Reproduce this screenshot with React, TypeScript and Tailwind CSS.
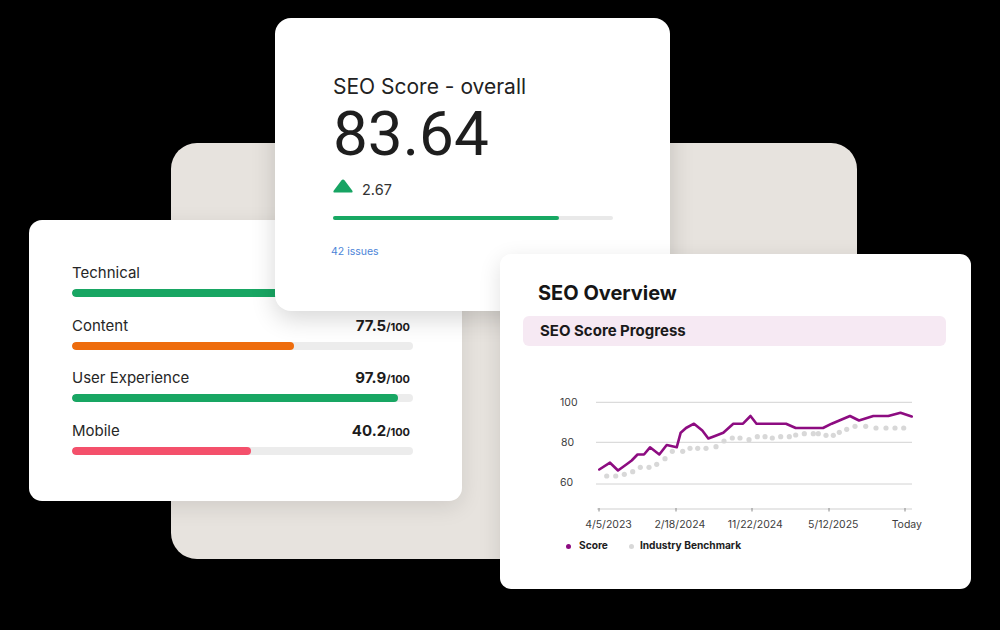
import React from "react";

const score: [number, number][] = [
  [599.3, 469.5], [610, 462.7], [618, 470.5], [627, 464], [631.7, 460.5], [637.5, 454.5], [644, 454.5],
  [650, 447.3], [659.3, 454.5], [666.7, 445], [676.7, 447.3], [680.7, 432.7], [686, 428], [694, 423.7],
  [702.3, 430.5], [708.3, 438.5], [715, 436], [723.3, 432.7], [733.3, 423.7], [743, 423.7], [750.5, 416],
  [756.5, 423.7], [786, 423.7], [795.7, 428], [823, 428], [831.7, 423.7], [841.7, 419.5], [850, 416],
  [859, 420.5], [873.3, 416], [888.3, 416], [900.5, 412.8], [911.7, 416.5],
];

const bench: [number, number][] = [
  [606.7, 476], [615.7, 476], [624.3, 474.3], [632.7, 471.7], [640.3, 467.3], [649, 467.3], [656.7, 464.3],
  [665, 458.7], [672.3, 451.3], [682.7, 451.3], [690, 448.3], [697.7, 448.3], [706, 448.3], [716, 446.7],
  [724, 441], [732.3, 438], [740, 438], [749, 439.7], [757.3, 436.7], [765, 436.7], [772.3, 438],
  [780.7, 436.7], [789.3, 436.7], [795.7, 435], [804.3, 433.7], [813.3, 433.7], [818.3, 433.7], [826, 435.3],
  [833.3, 435.3], [839.3, 432.3], [846.7, 429.3], [855, 426.3], [865.7, 426.3], [876, 428], [886, 428],
  [895, 428], [903.7, 428],
];

const rows = [
  { label: "Technical", value: "88.3", fill: 82, color: "bg-[#18a663]" },
  { label: "Content", value: "77.5", fill: 65.1, color: "bg-[#ee6c0c]" },
  { label: "User Experience", value: "97.9", fill: 95.5, color: "bg-[#18a663]" },
  { label: "Mobile", value: "40.2", fill: 52.5, color: "bg-[#f4506b]" },
];

function Chart() {
  const xLabels: [number, string][] = [
    [608.5, "4/5/2023"],
    [679.8, "2/18/2024"],
    [755.3, "11/22/2024"],
    [833.3, "5/12/2025"],
    [906.8, "Today"],
  ];
  return (
    <svg width={380} height={140} viewBox="550 390 380 140" className="block">
      {[402.3, 442.3, 484].map((y) => (
        <line key={y} x1={596} x2={912} y1={y} y2={y} stroke="#d2d2d2" strokeWidth={1} />
      ))}
      <line x1={597} x2={912} y1={509} y2={509} stroke="#cfcfcf" strokeWidth={1} />
      {[599, 676, 752, 829, 905].map((x) => (
        <line key={x} x1={x} x2={x} y1={508} y2={511.5} stroke="#8a8a8a" strokeWidth={1} />
      ))}
      <g fontFamily="Inter, sans-serif" fontSize={10.5} fill="#3d3d3d">
        <text x={560} y={406.3}>100</text>
        <text x={561} y={446}>80</text>
        <text x={560} y={486}>60</text>
        {xLabels.map(([x, t]) => (
          <text key={t} x={x} y={527.8} textAnchor="middle">
            {t}
          </text>
        ))}
      </g>
      {bench.map(([x, y], i) => (
        <circle key={i} cx={x} cy={y} r={2.6} fill="#d8d8d8" />
      ))}
      <polyline
        points={score.map((p) => p.join(",")).join(" ")}
        fill="none"
        stroke="#8d0c81"
        strokeWidth={2.6}
        strokeLinejoin="round"
        strokeLinecap="round"
      />
    </svg>
  );
}

export default function App() {
  return (
    <div className="relative w-[1000px] h-[630px] overflow-hidden bg-black font-[Inter,sans-serif]">
      {/* beige backdrop */}
      <div className="absolute left-[171px] top-[143px] w-[686px] h-[416px] rounded-[26px] bg-[#e7e3de]" />

      {/* left card: category scores */}
      <div className="absolute left-[29px] top-[220px] w-[433px] h-[281px] rounded-[13px] bg-white shadow-[0_6px_22px_rgba(0,0,0,0.10)] pt-[43px] pl-[43px] pr-[49px]">
        <div className="flex flex-col gap-[18.6px]">
          {rows.map((r) => (
            <div key={r.label} className="flex flex-col">
              <div className="flex items-baseline justify-between h-[18px] leading-[18px]">
                <span className="text-[15px] text-[#262626]">{r.label}</span>
                <span className="font-bold text-[#1c1c1c] pr-[3px]">
                  <span className="text-[15px]">{r.value}</span>
                  <span className="text-[11px]">/100</span>
                </span>
              </div>
              <div className="mt-[8px] h-[8px] w-full rounded-full bg-[#ececec] overflow-hidden">
                <div className={`h-full rounded-full ${r.color}`} style={{ width: `${r.fill}%` }} />
              </div>
            </div>
          ))}
        </div>
      </div>

      {/* top card: overall score */}
      <div className="absolute left-[275px] top-[18px] w-[395px] h-[293px] rounded-[16px] bg-white shadow-[0_8px_24px_rgba(0,0,0,0.16)] pt-[57px] pl-[58px]">
        <div className="text-[21px] leading-[24px] text-[#222]">SEO Score - overall</div>
        <div className="mt-[4px] font-[Roboto,sans-serif] text-[62px] leading-[62px] text-[#1e1e1e]">83.64</div>
        <div className="mt-[12px] flex items-start gap-[9px] h-[22px]">
          <svg width={20} height={15} viewBox="0 0 20 15" className="mt-[2px]">
            <path
              d="M8.3 1.4 Q10 -0.6 11.7 1.4 L19.2 11.6 Q20.4 13.6 18 13.6 L2 13.6 Q-0.4 13.6 0.8 11.6 Z"
              fill="#17a463"
            />
          </svg>
          <span className="mt-[2px] text-[14.5px] leading-[22px] text-[#333]">2.67</span>
        </div>
        <div className="mt-[17px] h-[4px] w-[280px] rounded-full bg-[#e9e9e9]">
          <div className="h-full w-[226px] rounded-full bg-[#17a863]" />
        </div>
        <div className="mt-[25px] -ml-[2px] text-[10.5px] leading-[14px] text-[#4c84d8]">42 issues</div>
      </div>

      {/* chart card */}
      <div className="absolute left-[500px] top-[254px] w-[471px] h-[335px] rounded-[11px] bg-white shadow-[0_6px_22px_rgba(0,0,0,0.12)] pt-[27px] pl-[23px] pr-[25px]">
        <div className="pl-[15px] text-[20px] leading-[24px] font-bold text-[#161616]">SEO Overview</div>
        <div className="mt-[11px] h-[30px] rounded-[6px] bg-[#f6e9f3] flex items-center pl-[17px]">
          <span className="text-[15px] font-bold text-[#1a1a1a]">SEO Score Progress</span>
        </div>
        <div className="mt-[44px] ml-[27px]">
          <Chart />
        </div>
        <div className="mt-[10px] ml-[43px] flex items-center h-[12px] text-[10.2px] font-bold text-[#1d1d1d]">
          <span className="w-[5px] h-[5px] rounded-full bg-[#8d0c81]" />
          <span className="ml-[8px]">Score</span>
          <span className="ml-[21px] w-[5px] h-[5px] rounded-full bg-[#d8d8d8]" />
          <span className="ml-[6px]">Industry Benchmark</span>
        </div>
      </div>
    </div>
  );
}
